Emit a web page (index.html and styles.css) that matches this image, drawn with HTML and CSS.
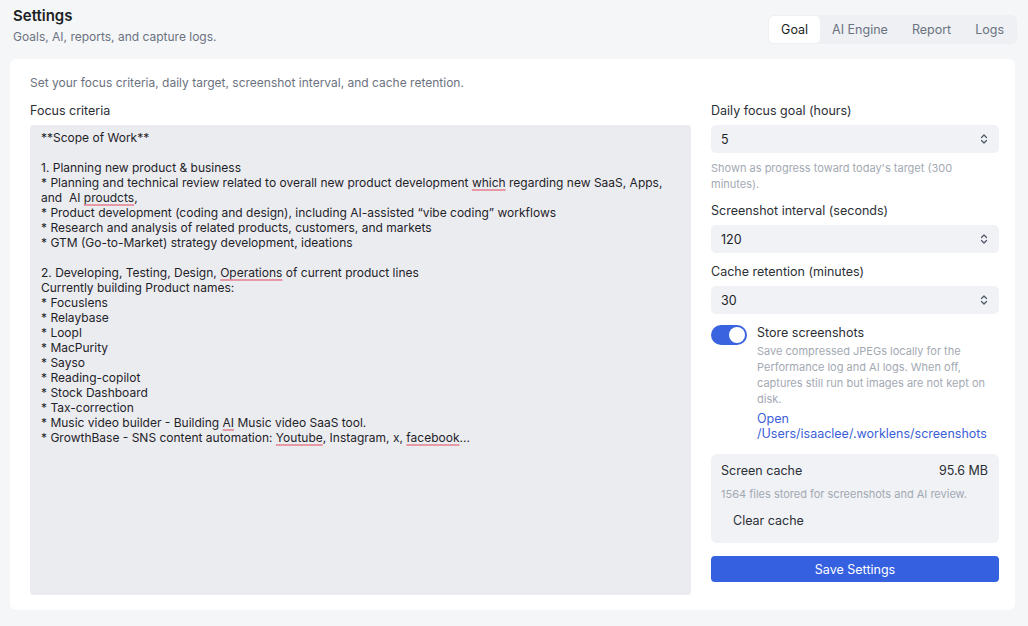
FILE: index.html
```html
<!DOCTYPE html>
<html lang="en">
<head>
    <meta charset="UTF-8">
    <meta name="viewport" content="width=device-width, initial-scale=1.0">
    <title>Settings</title>
    <link rel="stylesheet" href="styles.css">
</head>
<body>
    <div class="header">
        <div class="titles">
            <h1>Settings</h1>
            <p class="subtitle">Goals, AI, reports, and capture logs.</p>
        </div>
        <div class="tabs">
            <span class="tab active">Goal</span>
            <span class="tab">AI Engine</span>
            <span class="tab">Report</span>
            <span class="tab">Logs</span>
        </div>
    </div>

    <div class="card">
        <p class="intro">Set your focus criteria, daily target, screenshot interval, and cache retention.</p>
        <div class="columns">
            <div class="left">
                <label class="label">Focus criteria</label>
                <div class="editor">**Scope of Work**

1. Planning new product &amp; business
* Planning and technical review related to overall new product development <span class="typo">which</span> regarding new SaaS, Apps,
and  AI <span class="typo">proudcts</span>,
* Product development (coding and design), including AI-assisted “vibe coding” workflows
* Research and analysis of related products, customers, and markets
* GTM (Go-to-Market) strategy development, ideations

2. Developing, Testing, Design, <span class="typo">Operations</span> of current product lines
Currently building Product names:
* Focuslens
* Relaybase
* Loopl
* MacPurity
* Sayso
* Reading-copilot
* Stock Dashboard
* Tax-correction
* Music video builder - Building <span class="typo">AI</span> Music video SaaS tool.
* GrowthBase - SNS content automation: <span class="typo">Youtube</span>, Instagram, x, <span class="typo">facebook</span>...</div>
            </div>

            <div class="right">
                <label class="label">Daily focus goal (hours)</label>
                <div class="field">
                    <span>5</span>
                    <svg class="stepper" width="8" height="12" viewBox="0 0 8 12"><path d="M1.5 4.5L4 2l2.5 2.5M1.5 7.5L4 10l2.5-2.5" fill="none" stroke="#4b5563" stroke-width="1.2" stroke-linecap="round" stroke-linejoin="round"/></svg>
                </div>
                <p class="help">Shown as progress toward today's target (300 minutes).</p>

                <label class="label">Screenshot interval (seconds)</label>
                <div class="field">
                    <span>120</span>
                    <svg class="stepper" width="8" height="12" viewBox="0 0 8 12"><path d="M1.5 4.5L4 2l2.5 2.5M1.5 7.5L4 10l2.5-2.5" fill="none" stroke="#4b5563" stroke-width="1.2" stroke-linecap="round" stroke-linejoin="round"/></svg>
                </div>

                <label class="label spaced">Cache retention (minutes)</label>
                <div class="field">
                    <span>30</span>
                    <svg class="stepper" width="8" height="12" viewBox="0 0 8 12"><path d="M1.5 4.5L4 2l2.5 2.5M1.5 7.5L4 10l2.5-2.5" fill="none" stroke="#4b5563" stroke-width="1.2" stroke-linecap="round" stroke-linejoin="round"/></svg>
                </div>

                <div class="store">
                    <span class="toggle"><span class="knob"></span></span>
                    <div class="store-text">
                        <div class="store-title">Store screenshots</div>
                        <p class="store-desc">Save compressed JPEGs locally for the Performance log and AI logs. When off, captures still run but images are not kept on disk.</p>
                        <a class="link">Open<br>/Users/isaaclee/.worklens/screenshots</a>
                    </div>
                </div>

                <div class="cache">
                    <div class="cache-row">
                        <span>Screen cache</span>
                        <span>95.6 MB</span>
                    </div>
                    <p class="cache-note">1564 files stored for screenshots and AI review.</p>
                    <button class="clear-btn">Clear cache</button>
                </div>

                <button class="save-btn">Save Settings</button>
            </div>
        </div>
    </div>
</body>
</html>
```

FILE: styles.css
```css
body {
    margin: 0;
    padding: 0 13px 0 10px;
    background: #f5f6f8;
    font-family: Inter, "Noto Sans", sans-serif;
    color: #1f2329;
    height: 626px;
    overflow: hidden;
}
.header {
    display: flex;
    justify-content: space-between;
    align-items: flex-start;
    padding: 6px 0 0 3px;
    height: 59px;
    box-sizing: border-box;
}
h1 {
    margin: 0;
    font-size: 15px;
    font-weight: 600;
    line-height: 20px;
    color: #1c1f24;
}
.subtitle {
    margin: 3px 0 0;
    font-size: 12px;
    line-height: 16px;
    color: #6b7280;
}
.tabs {
    display: flex;
    margin: 9px -2px 0 0;
    padding: 1px;
    background: #eef0f3;
    border-radius: 6px;
}
.tab {
    padding: 0 12px;
    height: 27px;
    line-height: 27px;
    font-size: 12.5px;
    color: #6b7280;
    border-radius: 5px;
}
.tab.active {
    background: #fff;
    color: #1c1f24;
}
.card {
    background: #fff;
    border-radius: 6px;
    padding: 16px 16px 15px 20px;
    height: 551px;
    box-sizing: border-box;
}
.intro {
    margin: 0;
    font-size: 12px;
    line-height: 16px;
    color: #6b7280;
}
.columns {
    display: flex;
    gap: 20px;
    margin-top: 12px;
}
.left {
    width: 661px;
    display: flex;
    flex-direction: column;
}
.right {
    width: 288px;
}
.label {
    display: block;
    font-size: 12.5px;
    line-height: 16px;
    color: #2b2f36;
    margin-bottom: 6px;
}
.label.spaced {
    margin-top: 11px;
}
.editor {
    height: 470px;
    box-sizing: border-box;
    background: #ebecf0;
    border-radius: 4px;
    padding: 5px 11px;
    font-size: 12px;
    line-height: 15px;
    color: #1f2329;
    white-space: pre-wrap;
}
.typo {
    text-decoration: underline;
    text-decoration-color: #e59aa6;
    text-decoration-thickness: 2px;
    text-underline-offset: 2px;
}
.field {
    display: flex;
    justify-content: space-between;
    align-items: center;
    height: 28px;
    padding: 0 11px 0 10px;
    background: #f0f2f5;
    border-radius: 5px;
    font-size: 12.5px;
    color: #1f2329;
}
.help {
    margin: 7px 0 11px;
    font-size: 11px;
    line-height: 16px;
    color: #a3a9b3;
}
.store {
    display: flex;
    gap: 10px;
    margin-top: 11px;
}
.toggle {
    flex: none;
    width: 36px;
    height: 20px;
    background: #3a63df;
    border-radius: 10px;
    display: flex;
    justify-content: flex-end;
    align-items: center;
    padding: 0 2px;
    box-sizing: border-box;
}
.knob {
    width: 16px;
    height: 16px;
    background: #fff;
    border-radius: 50%;
}
.store-title {
    font-size: 12.5px;
    line-height: 16px;
    color: #2b2f36;
}
.store-desc {
    margin: 2px 0 4px;
    font-size: 11px;
    line-height: 16px;
    color: #a3a9b3;
}
.link {
    display: block;
    font-size: 12.5px;
    line-height: 15px;
    color: #3b5fd6;
}
.cache {
    margin-top: 13px;
    background: #f0f2f5;
    border-radius: 6px;
    padding: 9px 11px 9px 10px;
}
.cache-row {
    display: flex;
    justify-content: space-between;
    font-size: 12.5px;
    line-height: 16px;
    color: #2b2f36;
}
.cache-note {
    margin: 8px 0 5px;
    font-size: 11px;
    line-height: 14px;
    color: #a3a9b3;
}
.clear-btn {
    border: none;
    background: transparent;
    font-family: inherit;
    font-size: 12.5px;
    color: #2b2f36;
    padding: 6px 12px;
    height: 28px;
}
.save-btn {
    display: block;
    width: 100%;
    margin-top: 13px;
    height: 26px;
    border: none;
    border-radius: 4px;
    background: #3560e0;
    color: #fff;
    font-family: inherit;
    font-size: 12.5px;
}
```
